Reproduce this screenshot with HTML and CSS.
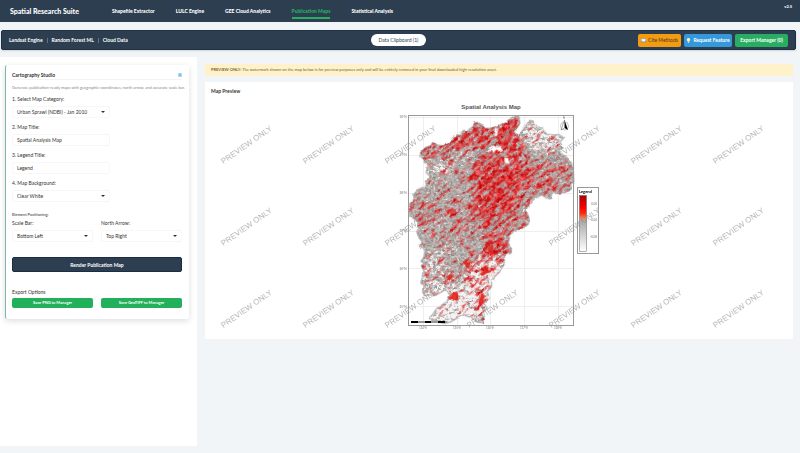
FILE: index.html
```html
<!DOCTYPE html>
<html lang="en">
<head>
<meta charset="utf-8">
<title>Spatial Research Suite</title>
<link rel="stylesheet" href="styles.css">
</head>
<body>
<header class="navbar">
  <span class="brand">Spatial Research Suite</span>
  <nav class="tabs">
    <a href="#">Shapefile Extractor</a>
    <a href="#">LULC Engine</a>
    <a href="#">GEE Cloud Analytics</a>
    <a href="#" class="active">Publication Maps</a>
    <a href="#">Statistical Analysis</a>
  </nav>
  <span class="version">v2.5</span>
</header>

<div class="toolbar">
  <div class="engines"><span>Landsat Engine</span><i></i><span>Random Forest ML</span><i></i><span>Cloud Data</span></div>
  <button class="clipboard">Data Clipboard (1)</button>
  <div class="actions">
    <button class="cite"><svg viewBox="0 0 12 10"><path d="M0 1h5l1 1 1-1h5v8H7L6 10 5 9H0z" fill="#5b83b5"/><path d="M1 1q3-1 5 1v6Q4 7 1 7zM11 1Q8 0 6 2v6q2-1 5-1z" fill="#f4f7fa"/></svg>Cite Methods</button>
    <button class="request"><svg viewBox="0 0 12 12"><path d="M6 0a4 4 0 0 1 2 7.500V9H4V7.500A4 4 0 0 1 6 0z" fill="#fff1b0"/><path d="M4 9h4v2H7v1H5v-1H4z" fill="#d9e0e6"/></svg>Request Feature</button>
    <button class="export">Export Manager (0)</button>
  </div>
</div>

<main class="workspace">
  <aside class="sidebar">
    <form class="studio">
      <div class="studio-head"><h2>Cartography Studio</h2>
        <svg class="info" viewBox="0 0 12 12"><rect width="12" height="12" rx="2" fill="#b5dcf7"/><path d="M3 3h6v6H3zM6 3v6M3 6h6" fill="none" stroke="#5fa9dd"/></svg></div>
      <p class="hint">Generate publication-ready maps with geographic coordinates, north arrow, and accurate scale bar.</p>

      <div class="field"><label for="category">1. Select Map Category:</label>
        <span class="pick"><select id="category"><option>Urban Sprawl (NDBI) - Jan 2010</option></select></span></div>
      <div class="field"><label for="title">2. Map Title:</label><input id="title" type="text" value="Spatial Analysis Map"></div>
      <div class="field"><label for="legend">3. Legend Title:</label><input id="legend" type="text" value="Legend"></div>
      <div class="field"><label for="background">4. Map Background:</label>
        <span class="pick"><select id="background"><option>Clear White</option></select></span></div>

      <h3>Element Positioning:</h3>
      <div class="pair">
        <div class="field"><label for="scale">Scale Bar:</label>
          <span class="pick"><select id="scale"><option>Bottom Left</option></select></span></div>
        <div class="field"><label for="north">North Arrow:</label>
          <span class="pick"><select id="north"><option>Top Right</option></select></span></div>
      </div>
      <button type="button" class="render">Render Publication Map</button>
      <h4>Export Options</h4>
      <div class="pair">
        <button type="button" class="save">Save PNG to Manager</button>
        <button type="button" class="save">Save GeoTIFF to Manager</button>
      </div>
    </form>
  </aside>

  <section class="content">
    <p class="notice"><b>PREVIEW ONLY:</b> The watermark shown on the map below is for preview purposes only and will be entirely removed in your final downloaded high-resolution asset.</p>
    <div class="preview">
      <h2>Map Preview</h2>
      <svg class="map" viewBox="205 99 588 240">
        <defs>
          <linearGradient id="ramp" x1="0" y1="0" x2="0" y2="1">
            <stop offset="0" stop-color="#a50008"/><stop offset=".22" stop-color="#f00"/><stop offset=".32" stop-color="#fb2d12"/>
            <stop offset=".4" stop-color="#f08050"/><stop offset=".46" stop-color="#aaa"/><stop offset="1" stop-color="#fff"/>
          </linearGradient>
          <path id="outline" d="M357 66L340 62 330 72 322 82 305 88 290 92 270 100 255 100 245 88 232 82 220 84 215 98 205 108 190 106 183 112 187 120 170 120 158 128 152 140 140 148 125 152 112 150 98 142 92 152 75 158 62 172 60 186 72 198 84 212 78 228 90 246 76 258 80 272 65 278 50 288 40 298 42 312 30 325 26 345 32 365 48 376 56 400 50 410 58 430 66 440 58 455 76 465 72 485 62 500 74 500 64 512 72 530 70 545 62 560 74 575 64 585 74 602 88 600 105 602 135 585 150 600 140 620 110 640 100 655 88 670 110 680 130 685 150 682 170 670 190 660 215 668 230 680 250 684 250 670 245 655 262 640 252 625 268 610 262 590 275 575 275 555 290 540 300 530 312 510 314 480 330 475 335 462 325 445 330 420 345 405 365 402 385 388 388 370 378 345 390 325 405 310 425 300 440 310 452 312 455 295 480 295 500 290 515 282 512 265 522 262 520 235 515 205 505 190 490 180 475 170 490 160 480 140 492 130 480 118 465 120 440 118 430 100 410 95 400 85 400 78 388 76 380 88 365 110 355 125 345 115 340 105 352 98 360 85z"/>
          <clipPath id="region"><use href="#outline"/></clipPath>
          <filter id="ragged" filterUnits="userSpaceOnUse" x="0" y="0" width="600" height="720">
            <feTurbulence type="fractalNoise" baseFrequency=".07" numOctaves="2" seed="5"/>
            <feDisplacementMap in="SourceGraphic" scale="9" xChannelSelector="R" yChannelSelector="G"/>
          </filter>
          <filter id="terrain" x="0" y="0" width="100%" height="100%" color-interpolation-filters="sRGB">
            <feTurbulence type="fractalNoise" baseFrequency=".16 .22" numOctaves="3" seed="8"/>
            <feColorMatrix values=".7 .2 0 0 .25  .6 .2 .1 0 .23  .6 .15 .15 0 .22  0 0 0 0 1"/>
          </filter>
          <filter id="built" filterUnits="userSpaceOnUse" x="-500" y="0" width="1100" height="1000" color-interpolation-filters="sRGB">
            <feGaussianBlur in="SourceGraphic" stdDeviation="14" result="density"/>
            <feTurbulence type="fractalNoise" baseFrequency=".035 .13" numOctaves="5" seed="21"/>
            <feColorMatrix values="0 0 0 0 0  0 0 0 0 0  0 0 0 0 0  1 0 0 0 0" result="noise"/>
            <feComposite in="noise" in2="density" operator="arithmetic" k2="1" k3=".3"/>
            <feComponentTransfer result="mask"><feFuncA type="linear" slope="7" intercept="-4.300"/></feComponentTransfer>
            <feTurbulence type="fractalNoise" baseFrequency=".12" numOctaves="2" seed="3"/>
            <feColorMatrix values=".6 0 0 0 .56  1.2 0 0 0 -.46  1.2 0 0 0 -.45  0 0 0 0 1"/>
            <feComposite in2="mask" operator="in"/>
          </filter>
          <filter id="bare" filterUnits="userSpaceOnUse" x="0" y="0" width="600" height="720" color-interpolation-filters="sRGB">
            <feGaussianBlur in="SourceGraphic" stdDeviation="14" result="density"/>
            <feTurbulence type="fractalNoise" baseFrequency=".09 .12" numOctaves="3" seed="31"/>
            <feColorMatrix values="0 0 0 0 0  0 0 0 0 0  0 0 0 0 0  1 0 0 0 0"/>
            <feComposite in2="density" operator="arithmetic" k2="1" k3=".4"/>
            <feComponentTransfer result="mask"><feFuncA type="linear" slope="5" intercept="-3.300"/></feComponentTransfer>
            <feFlood flood-color="#f3f3f3"/><feComposite in2="mask" operator="in"/>
          </filter>
        </defs>

        <text class="map-title" x="491" y="109">Spatial Analysis Map</text>
        <path class="grid" d="M423.500 115v210M457.500 115v210M490.500 115v210M524.500 115v210M558.500 115v210M409 117.500h165M409 155.500h165M409 193.500h165M409 231.500h165M409 268.500h165M409 306.500h165"/>

        <g transform="translate(400 95) scale(.33333)">
          <g filter="url(#ragged)">
            <g clip-path="url(#region)">
              <rect width="600" height="720" filter="url(#terrain)"/>
              <g filter="url(#bare)">
                <path d="M380 70L500 120 470 180 360 150zM90 205L170 190 150 230 90 240z" opacity=".8"/>
                <path d="M80 690L60 600 180 570 230 480 330 480 260 690z" opacity=".9"/>
                <path d="M160 170h75v25h-75zM60 480L150 450 150 600 60 600z" opacity=".55"/>
              </g>
              <g transform="rotate(-38 300 350)">
                <g filter="url(#built)">
                  <g transform="rotate(38 300 350)">
                    <path d="M20 180h520v520H20z" opacity=".1"/>
                    <path d="M300 60h70v40l-70 50-60 10-150 30-40-20 40-40 130-70z" opacity=".7"/>
                    <path d="M325 100h40l10 110 30 20-50 100-100 60-60-30 30-80-40-50 50-30z" opacity=".75"/>
                    <path d="M250 240l120-50 20 190-80 120-70-20z" opacity=".4"/>
                    <path d="M380 200l140 0 0 90-120 20z" opacity=".4"/>
                    <path d="M20 300l100 30 60-20 20 100-60 0-100-20z" opacity=".35"/>
                    <path d="M330 400l-30 110-80 60-50-10 70-80 10-80z" opacity=".5"/>
                    <path d="M235 580l20 0-5 80-15 0z" opacity=".8"/>
                  </g>
                </g>
              </g>
              <path d="M288 95l6 6-2 20-8 5 2-18zM265 158l18-8 5 8 16-4 4 12-12 3-5-6-12 10-8-5-8 4zM312 192l12-4 4 16-12 0z" fill="#fff"/>
              <path d="M192 500l8-10 4 12 10-4 -6 20-10 2zM265 460l10-12 4 14-6 16-8-4zM240 535l20-9 18-2 10-8-8 14-20 6-14 8zM138 546l10-6 14 0-8 12-12 4zM150 600l10-8 10-2 10 16-12 10-10-4-12 4zM242 597l12 2-4 20-6 16-8-8z" fill="#e2201a" opacity=".9"/>
            </g>
            <use href="#outline" fill="none" stroke="#888" stroke-width="2"/>
          </g>
        </g>

        <rect class="frame" x="408.500" y="115.500" width="165" height="210"/>
        <path d="M411 322h36" stroke="#999" stroke-width="2"/>
        <path d="M411 322h7M425 322h6M438 322h7" stroke="#000" stroke-width="2"/>
        <g class="ticks">
          <text x="403" y="118">30°N</text><text x="403" y="156">29°N</text><text x="403" y="194">28°N</text>
          <text x="403" y="232">27°N</text><text x="403" y="270">26°N</text><text x="403" y="308">25°N</text>
          <text x="423" y="329">114°E</text><text x="457" y="329">115°E</text><text x="490" y="329">116°E</text>
          <text x="524" y="329">117°E</text><text x="558" y="329">118°E</text><text x="564" y="119">N</text>
        </g>
        <circle cx="564.500" cy="126" r="4" fill="none" stroke="#888" stroke-width=".5"/>
        <path d="M564.500 120l3.500 10-3.500-2z" fill="#000"/><path d="M564.500 120l-3.500 10 3.500-2z" fill="#fff" stroke="#555" stroke-width=".5"/>

        <rect x="577.500" y="187.500" width="21" height="66" fill="#fff" stroke="#999"/>
        <text class="legend-title" x="579" y="193">Legend</text>
        <rect x="579.500" y="195.500" width="7" height="56" fill="url(#ramp)" stroke="#666" stroke-width=".5"/>
        <g class="legend-values"><text x="597" y="205">0.00</text><text x="597" y="221">-0.04</text><text x="597" y="238">-0.08</text></g>
        <g id="watermarks" class="watermarks"></g>
      </svg>
    </div>
  </section>
</main>
<script src="watermarks.js"></script>
</body>
</html>
```
FILE: watermarks.js
```js
const layer = document.getElementById("watermarks");
for (let row = 0; row < 3; row++) {
  for (let col = 0; col < 7; col++) {
    const mark = document.createElementNS("http://www.w3.org/2000/svg", "text");
    mark.setAttribute("transform", `translate(${248 + col * 82} ${147 + row * 82}) rotate(-35)`);
    mark.textContent = "PREVIEW ONLY";
    layer.append(mark);
  }
}
```
FILE: styles.css
```css
* { box-sizing: border-box; }
body {
  margin: 0;
  min-height: 100vh;
  font: 5px/6px Lato, "Liberation Sans", sans-serif;
  color: #333;
  background: #f2f5f8;
}
h2, h3, h4, p { margin: 0; }
button, input, select { font: inherit; color: inherit; border: 0; margin: 0; }
button { display: flex; align-items: center; justify-content: center; gap: 2px; padding: 0; font-weight: 700; color: #fff; }

.navbar {
  display: flex;
  align-items: center;
  height: 22px;
  padding: 0 8px 0 10px;
  background: #2c3e50;
  color: #fff;
  font-weight: 900;
}
.brand { width: 102px; font-size: 7px; line-height: 8px; font-weight: 900; }
.tabs { display: flex; gap: 21px; flex: 1; }
.tabs a { color: #fff; text-decoration: none; padding: 5px 0 3px; border-bottom: 2px solid transparent; }
.tabs .active { color: #27ae60; border-color: #27ae60; }
.version { font-size: 4px; align-self: flex-start; padding-top: 4px; }

.toolbar {
  display: grid;
  grid-template-columns: 1fr auto 1fr;
  align-items: center;
  height: 20px;
  margin: 8px 4px 7px 1px;
  padding: 0 7px;
  border-radius: 2px;
  background: #2c3e50;
  border: 1px solid #1d3044;
  color: #fff;
  box-shadow: 0 1px 2px #0002;
}
.engines { display: flex; align-items: center; gap: 4px; font-weight: 700; }
.engines i { width: 1px; height: 5px; background: #66727f; }
.clipboard { width: 55px; height: 12px; border-radius: 6px; background: #fff; color: #2c3e50; font-weight: 400; }
.actions { display: flex; justify-content: flex-end; gap: 3px; }
.actions button { height: 13px; border-radius: 2px; }
.actions svg { width: 5px; height: 5px; }
.actions .cite { width: 43px; background: #f39c12; color: #4a3a26; font-weight: 400; }
.actions .request { width: 48px; background: #3498db; }
.actions .export { width: 53px; background: #27ae60; }

.workspace { display: grid; grid-template-columns: minmax(0, 197fr) minmax(0, 603fr); align-items: start; }
.sidebar { background: #fff; min-height: calc(100vh - 64px); padding: 8px 8px 0 5px; }
.studio {
  padding: 5px 7px 11px 6px;
  border-left: 1px solid #7fb5a2;
  border-radius: 2px;
  background: #fff;
  box-shadow: 0 2px 6px #0002;
}
.studio-head { display: flex; align-items: center; justify-content: space-between; height: 10px; border-bottom: 1px solid #f3f3f3; }
h2 { font-size: 5px; line-height: 6px; font-weight: 700; }
.info { width: 4px; height: 4px; }
.hint { margin: 5px 0; font-size: 4px; line-height: 6px; color: #888; white-space: nowrap; }
.field { margin-bottom: 6px; }
.field label { display: block; line-height: 7px; margin-bottom: 3px; }
.field input, .pick { display: block; width: 98px; height: 12px; }
.field input, .pick select { padding: 0 4px; border: 1px solid #f7f7f7; border-radius: 2px; background: #fff; }
.pick { position: relative; }
.pick select { width: 100%; height: 100%; appearance: none; }
.pick::after {
  content: "";
  position: absolute;
  right: 5px;
  top: 5px;
  border: 2px solid transparent;
  border-top-color: #333;
  border-bottom: 0;
}
h3 { font-size: 4px; line-height: 6px; font-weight: 700; color: #666; margin-top: 10px; }
.pair { display: grid; grid-template-columns: 1fr 1fr; gap: 8px; }
.pair .pick { width: 100%; }
.pair label { margin: 2px 0 3px; }
.render { width: 100%; height: 15px; margin-top: 9px; border-radius: 2px; background: #2c3e50; border: 1px solid #1b2d42; }
h4 { font-size: 5px; line-height: 6px; font-weight: 400; margin: 17px 0 3px; }
.save { height: 10px; border-radius: 2px; background: #22b05a; font-size: 4px; }

.content { padding: 7px 7px 0 8px; }
.notice { height: 12px; padding: 0 6px; font-size: 4px; line-height: 12px; color: #75653a; background: #fff1ca; white-space: nowrap; overflow: hidden; }
.preview { margin-top: 6px; padding-top: 6px; background: #fff; }
.preview h2 { padding: 0 6px; }
.map { display: block; width: 100%; margin-top: 5px; font-family: Lato, sans-serif; }
.map-title { font: 700 6px "Liberation Sans", sans-serif; text-anchor: middle; fill: #555; }
.grid { stroke: #eee; fill: none; }
.frame { fill: none; stroke: #999; }
.ticks { font-size: 3px; fill: #777; text-anchor: middle; }
.legend-title { font-size: 4px; font-weight: 700; }
.legend-values { font-size: 3px; fill: #777; text-anchor: end; }
.watermarks { font: 8px "Liberation Sans", sans-serif; fill: #888; fill-opacity: .65; text-anchor: middle; }
```
